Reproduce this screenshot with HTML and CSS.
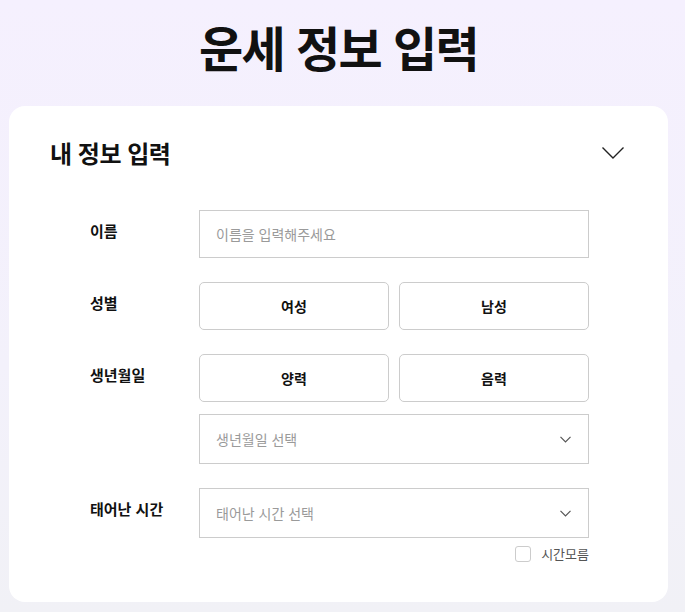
FILE: index.html
```html
<!DOCTYPE html>
<html lang="ko">
<head>
    <meta charset="UTF-8">
    <meta name="viewport" content="width=device-width, initial-scale=1.0">
    <title>운세 정보 입력</title>
    <link rel="stylesheet" href="styles.css">
</head>
<body>
    <h1 class="page-title">운세 정보 입력</h1>

    <div class="card">
        <!-- 카드 헤더 -->
        <div class="card-header">
            <h2>내 정보 입력</h2>
            <svg class="toggle" width="22" height="12" viewBox="0 0 22 12">
                <polyline points="0.5,0.5 11,11 21.5,0.5" fill="none" stroke="#222" stroke-width="1.4"/>
            </svg>
        </div>

        <!-- 입력 폼 -->
        <form class="info-form">
            <div class="row">
                <label class="label">이름</label>
                <div class="field">
                    <input type="text" class="text-input" placeholder="이름을 입력해주세요">
                </div>
            </div>

            <div class="row">
                <label class="label">성별</label>
                <div class="field">
                    <div class="btn-group">
                        <button type="button" class="opt-btn">여성</button>
                        <button type="button" class="opt-btn">남성</button>
                    </div>
                </div>
            </div>

            <div class="row">
                <label class="label">생년월일</label>
                <div class="field">
                    <div class="btn-group">
                        <button type="button" class="opt-btn">양력</button>
                        <button type="button" class="opt-btn">음력</button>
                    </div>
                    <div class="select-box">
                        <span>생년월일 선택</span>
                        <svg width="11" height="7" viewBox="0 0 11 7">
                            <polyline points="0.5,0.8 5.5,5.8 10.5,0.8" fill="none" stroke="#555" stroke-width="1.2"/>
                        </svg>
                    </div>
                </div>
            </div>

            <div class="row">
                <label class="label">태어난 시간</label>
                <div class="field">
                    <div class="select-box">
                        <span>태어난 시간 선택</span>
                        <svg width="11" height="7" viewBox="0 0 11 7">
                            <polyline points="0.5,0.8 5.5,5.8 10.5,0.8" fill="none" stroke="#555" stroke-width="1.2"/>
                        </svg>
                    </div>
                    <label class="unknown">
                        <span class="check"></span>
                        시간모름
                    </label>
                </div>
            </div>
        </form>
    </div>
</body>
</html>
```

FILE: styles.css
```css
body {
    margin: 0;
    padding: 0;
    font-family: "Noto Sans CJK KR", "Noto Sans", sans-serif;
    color: #111;
    background: linear-gradient(180deg, #f5f0fe 0%, #f3f1fb 60%, #f1f1f6 100%);
    min-height: 612px;
}
.page-title {
    margin: 0;
    padding: 17px 8px 0 0;
    font-size: 48px;
    line-height: 58px;
    font-weight: 700;
    text-align: center;
    letter-spacing: -1.6px;
    color: #111;
}
.card {
    margin: 31px 17px 0 9px;
    background-color: white;
    border-radius: 16px;
    padding: 28px 44px 39px 41px;
}
.card-header {
    display: flex;
    align-items: center;
    justify-content: space-between;
    height: 36px;
}
.card-header h2 {
    margin: 0;
    font-size: 24px;
    font-weight: 700;
    letter-spacing: -0.5px;
}
.toggle {
    display: block;
    margin-top: 2px;
}
.info-form {
    margin-top: 40px;
    padding: 0 35px 0 40px;
    display: flex;
    flex-direction: column;
    gap: 24px;
}
.row {
    display: flex;
}
.label {
    width: 109px;
    flex-shrink: 0;
    padding-top: 10px;
    font-size: 15px;
    line-height: 22px;
    font-weight: 700;
}
.field {
    flex: 1;
    display: flex;
    flex-direction: column;
    gap: 12px;
}
.text-input {
    box-sizing: border-box;
    width: 100%;
    height: 48px;
    padding: 0 16px;
    border: 1px solid #ccc;
    border-radius: 0;
    font-family: inherit;
    font-size: 14px;
    outline: none;
}
.text-input::placeholder {
    color: #9a9a9a;
}
.btn-group {
    display: flex;
    gap: 10px;
}
.opt-btn {
    flex: 1;
    height: 48px;
    background-color: white;
    border: 1px solid #ccc;
    border-radius: 5px;
    font-family: inherit;
    font-size: 14px;
    font-weight: 700;
    color: #111;
    cursor: pointer;
}
.select-box {
    box-sizing: border-box;
    height: 50px;
    display: flex;
    align-items: center;
    justify-content: space-between;
    padding: 0 17px 0 16px;
    border: 1px solid #ccc;
    font-size: 14px;
    color: #9a9a9a;
}
.unknown {
    display: flex;
    align-items: center;
    justify-content: flex-end;
    gap: 10px;
    margin-top: -6px;
    font-size: 13px;
    color: #555;
}
.check {
    box-sizing: border-box;
    width: 16px;
    height: 16px;
    border: 1px solid #ccc;
    border-radius: 3px;
}
```
